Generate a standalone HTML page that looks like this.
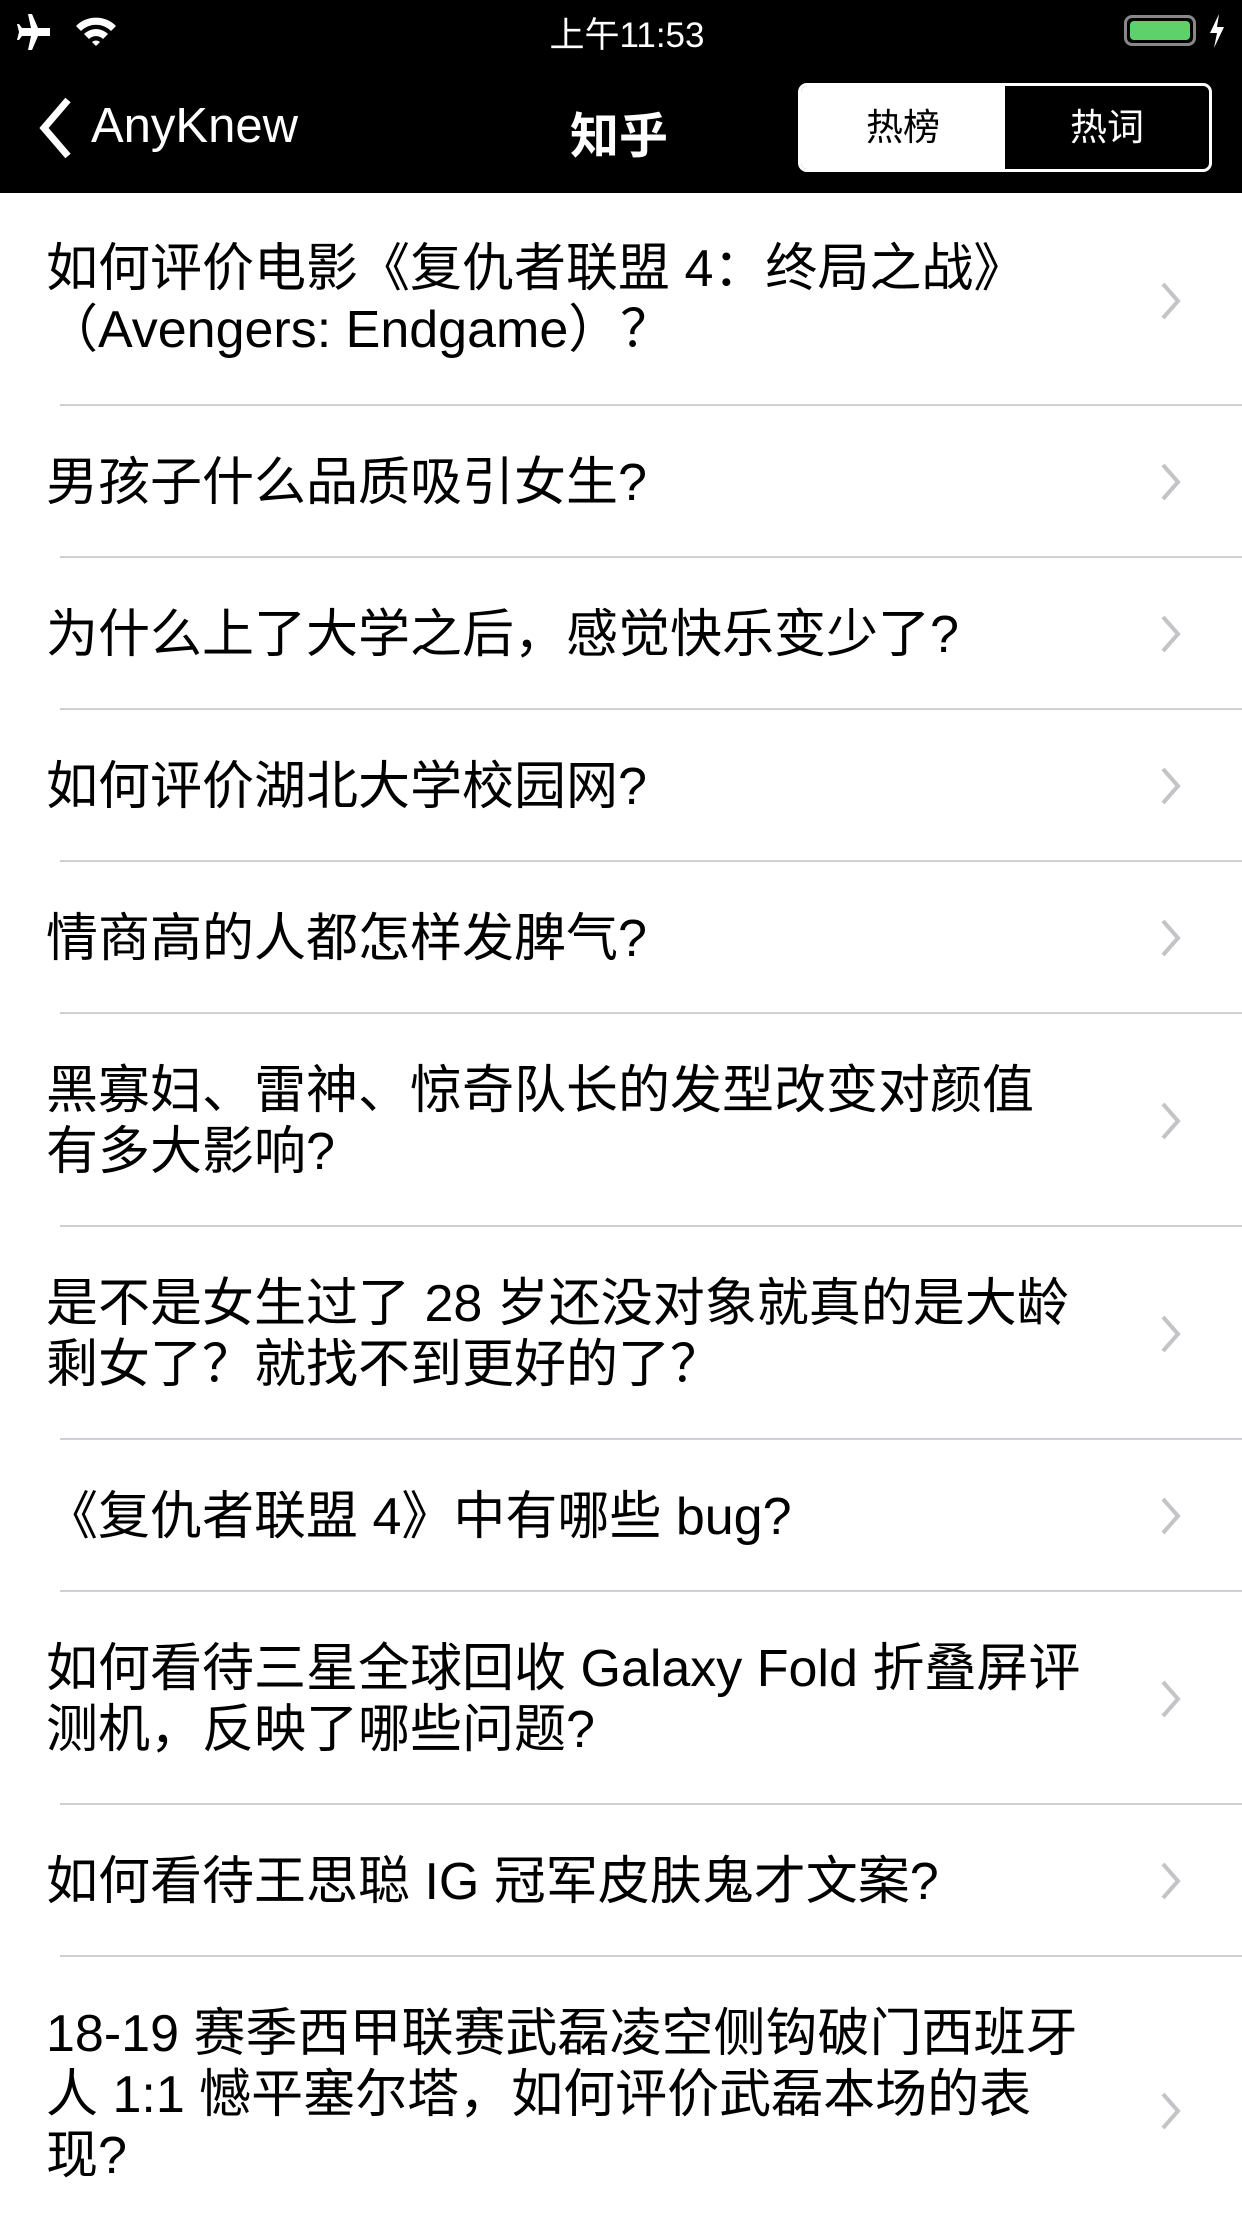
<!DOCTYPE html>
<html><head><meta charset="utf-8"><style>
*{margin:0;padding:0;box-sizing:border-box}
body{width:1242px;height:2208px;overflow:hidden;background:#fff;font-family:"Liberation Sans","Noto Sans CJK SC",sans-serif;position:relative}
.hdr{position:absolute;left:0;top:0;width:1242px;height:193px;background:#000;color:#fff}
.row{position:absolute;left:0;width:1242px}
.row .t{position:absolute;left:46px;font-size:52px;line-height:61px;color:#000;width:1100px;white-space:nowrap}
.row .sep{position:absolute;left:60px;right:0;bottom:0;height:2px;background:#d0d0d4}
.chev{position:absolute;left:1160px;width:22px;height:40px}
</style></head><body>
<div class="hdr">
<svg style="position:absolute;left:14px;top:14px" width="40" height="36" viewBox="0 0 40 36"><path d="M20 2 L24 2 L24 14 L38 20 L38 24 L24 21 L24 30 L28 33 L28 35 L20 33 L12 35 L12 33 L16 30 L16 21 L2 24 L2 20 L16 14 L16 2Z" fill="#fff" transform="rotate(90 20 18)"/></svg>
<svg style="position:absolute;left:74px;top:14px" width="44" height="34" viewBox="0 0 44 34"><path d="M2 12 A28 28 0 0 1 42 12 L37 17 A21 21 0 0 0 7 17Z M10 20 A17 17 0 0 1 34 20 L29 25 A10 10 0 0 0 15 25Z M18 28 A6 6 0 0 1 26 28 L22 32Z" fill="#fff"/></svg>
<div style="position:absolute;left:0;width:1254px;top:7px;text-align:center;font-size:35px">上午11:53</div>
<div style="position:absolute;left:1124px;top:15px;width:72px;height:31px;border:3px solid #888;border-radius:8px;padding:3px"><div style="width:100%;height:100%;background:#5fd16b;border-radius:4px"></div></div>
<svg style="position:absolute;left:1208px;top:14px" width="18" height="34" viewBox="0 0 18 34"><path d="M11 0 L2 19 L9 19 L6 34 L16 13 L9 13Z" fill="#fff"/></svg>
<svg style="position:absolute;left:36px;top:96px" width="40" height="64" viewBox="0 0 40 64"><path d="M32 4 L8 32 L32 60" stroke="#fff" stroke-width="7" fill="none"/></svg>
<div style="position:absolute;left:91px;top:98px;font-size:49px">AnyKnew</div>
<div style="position:absolute;left:570px;top:97px;font-size:49px;font-weight:bold">知乎</div>
<div style="position:absolute;left:798px;top:83px;width:414px;height:89px;border:3px solid #fff;border-radius:9px;overflow:hidden;display:flex">
<div style="width:50%;background:#fff;color:#000;font-size:37px;text-align:center;line-height:83px">热榜</div>
<div style="width:50%;color:#fff;font-size:37px;text-align:center;line-height:83px">热词</div>
</div>
</div>

<div class="row" style="top:193px;height:213px"><div class="t" style="top:46px">如何评价电影《复仇者联盟 4：终局之战》<br>（Avengers: Endgame）？</div><svg class="chev" style="top:88px" viewBox="0 0 22 40"><path d="M3 3 L18 20 L3 37" stroke="#c4c4c8" stroke-width="4" fill="none"/></svg><div class="sep"></div></div>
<div class="row" style="top:406px;height:152px"><div class="t" style="top:47px">男孩子什么品质吸引女生?</div><svg class="chev" style="top:56px" viewBox="0 0 22 40"><path d="M3 3 L18 20 L3 37" stroke="#c4c4c8" stroke-width="4" fill="none"/></svg><div class="sep"></div></div>
<div class="row" style="top:558px;height:152px"><div class="t" style="top:47px">为什么上了大学之后，感觉快乐变少了?</div><svg class="chev" style="top:56px" viewBox="0 0 22 40"><path d="M3 3 L18 20 L3 37" stroke="#c4c4c8" stroke-width="4" fill="none"/></svg><div class="sep"></div></div>
<div class="row" style="top:710px;height:152px"><div class="t" style="top:47px">如何评价湖北大学校园网?</div><svg class="chev" style="top:56px" viewBox="0 0 22 40"><path d="M3 3 L18 20 L3 37" stroke="#c4c4c8" stroke-width="4" fill="none"/></svg><div class="sep"></div></div>
<div class="row" style="top:862px;height:152px"><div class="t" style="top:47px">情商高的人都怎样发脾气?</div><svg class="chev" style="top:56px" viewBox="0 0 22 40"><path d="M3 3 L18 20 L3 37" stroke="#c4c4c8" stroke-width="4" fill="none"/></svg><div class="sep"></div></div>
<div class="row" style="top:1014px;height:213px"><div class="t" style="top:47px">黑寡妇、雷神、惊奇队长的发型改变对颜值<br>有多大影响?</div><svg class="chev" style="top:87px" viewBox="0 0 22 40"><path d="M3 3 L18 20 L3 37" stroke="#c4c4c8" stroke-width="4" fill="none"/></svg><div class="sep"></div></div>
<div class="row" style="top:1227px;height:213px"><div class="t" style="top:47px">是不是女生过了 28 岁还没对象就真的是大龄<br>剩女了？就找不到更好的了？</div><svg class="chev" style="top:87px" viewBox="0 0 22 40"><path d="M3 3 L18 20 L3 37" stroke="#c4c4c8" stroke-width="4" fill="none"/></svg><div class="sep"></div></div>
<div class="row" style="top:1440px;height:152px"><div class="t" style="top:47px">《复仇者联盟 4》中有哪些 bug?</div><svg class="chev" style="top:56px" viewBox="0 0 22 40"><path d="M3 3 L18 20 L3 37" stroke="#c4c4c8" stroke-width="4" fill="none"/></svg><div class="sep"></div></div>
<div class="row" style="top:1592px;height:213px"><div class="t" style="top:47px">如何看待三星全球回收 Galaxy Fold 折叠屏评<br>测机，反映了哪些问题?</div><svg class="chev" style="top:87px" viewBox="0 0 22 40"><path d="M3 3 L18 20 L3 37" stroke="#c4c4c8" stroke-width="4" fill="none"/></svg><div class="sep"></div></div>
<div class="row" style="top:1805px;height:152px"><div class="t" style="top:47px">如何看待王思聪 IG 冠军皮肤鬼才文案?</div><svg class="chev" style="top:56px" viewBox="0 0 22 40"><path d="M3 3 L18 20 L3 37" stroke="#c4c4c8" stroke-width="4" fill="none"/></svg><div class="sep"></div></div>
<div class="row" style="top:1957px;height:260px"><div class="t" style="top:47px">18-19 赛季西甲联赛武磊凌空侧钩破门西班牙<br>人 1:1 憾平塞尔塔，如何评价武磊本场的表<br>现?</div><svg class="chev" style="top:134px" viewBox="0 0 22 40"><path d="M3 3 L18 20 L3 37" stroke="#c4c4c8" stroke-width="4" fill="none"/></svg></div>
</body></html>
